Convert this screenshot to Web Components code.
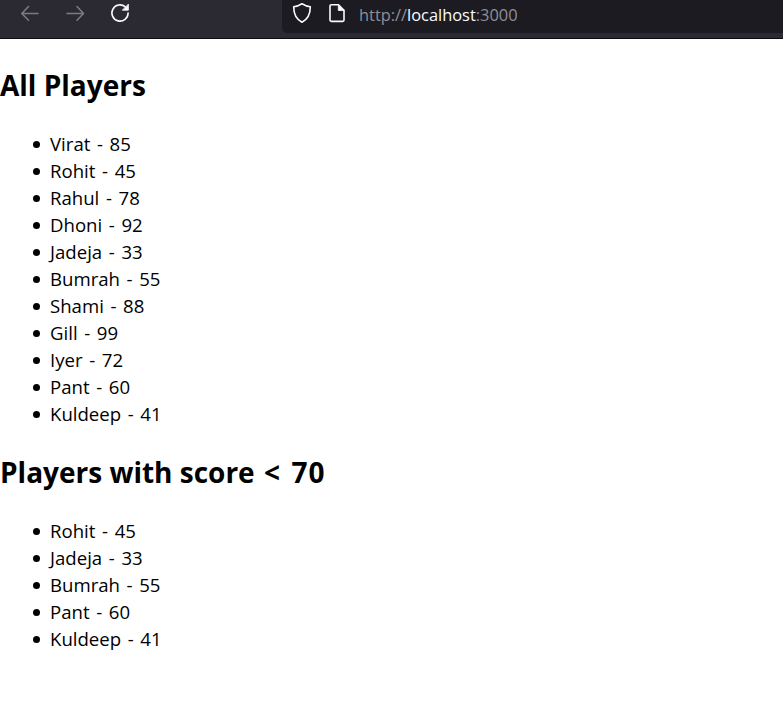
<!DOCTYPE html>
<html lang="en"><head><meta charset="utf-8"><title>Players</title>
<style>body{margin:0;background:#fff;color:#000;font-family:"Open Sans","Noto Sans",sans-serif}</style></head>
<body><browser-bar></browser-bar><player-app></player-app>
<script>
customElements.define('browser-bar', class extends HTMLElement {
  constructor() {
    super();
    this.attachShadow({mode:'open'}).innerHTML = `
<style>
:host{display:flex;box-sizing:border-box;height:39px;background:#2b2a33;border-bottom:1px solid #0c0c0d}
.nav{display:flex;width:282px;box-sizing:border-box;padding:2px 0 0 19px;gap:23px}
.url{flex:1;display:flex;height:33px;background:#1c1b22;border-radius:0 0 0 5px;box-sizing:border-box;padding:2px 0 0 9px}
svg{width:22px;height:22px;fill:none;stroke:#fbfbfe;stroke-width:1.6;stroke-linecap:round;stroke-linejoin:round;flex:none}
.dim{stroke:#7b7a82}
.page{margin-left:13px}
.fill{fill:#fbfbfe;stroke-width:.8}
span{font:16.4px/26px "Open Sans",sans-serif;color:#8f8f96;margin-left:11px;white-space:nowrap}
b{font-weight:400;color:#fbfbfe}
</style>
<div class="nav">
<svg class="dim" viewBox="0 0 22 22"><path d="M19 11.5H3M9.5 4.5L2.8 11.5l6.7 6.7"/></svg>
<svg class="dim" viewBox="0 0 22 22"><path d="M3 11.5h16M13 4.5l6.5 7-6.5 6.7"/></svg>
<svg viewBox="0 0 22 22"><path d="M19.1 11A8.1 8.1 0 1 1 16.3 4.9"/><path class="fill" d="M19.4 2.4v5.8h-5.8z"/></svg>
</div>
<div class="url">
<svg viewBox="0 0 22 22"><path d="M11 1.8C8.700 3.200 5.700 4.400 2.700 4.800C2.700 11.500 4.500 17 11 20.200C17.500 17 19.300 11.500 19.300 4.800C16.300 4.400 13.300 3.200 11 1.800z"/></svg>
<svg class="page" viewBox="0 0 22 22"><path d="M5.300 2.800h7.200l5.500 5.500v9.800a1.300 1.300 0 0 1-1.300 1.300H5.300A1.300 1.300 0 0 1 4 18.100V4.100a1.300 1.300 0 0 1 1.300-1.300z"/><path class="fill" d="M12.300 3v5.500h5.500z"/></svg>
<span>http://<b>localhost</b>:3000</span></div>`;
  }
});
customElements.define('player-list', class extends HTMLElement {
  connectedCallback() {
    this.attachShadow({mode:'open'}).innerHTML = `
<style>
:host{display:block}
h2{margin:0;font-size:28px;line-height:40px;font-weight:700;white-space:nowrap}
::slotted(.limit){letter-spacing:.9px;word-spacing:2.5px;margin-left:2px}
ul{margin:25px 0;padding:0 0 0 33px;list-style:none}
li{display:flex;align-items:center;font-size:18.6px;line-height:27px;word-spacing:1.8px}
li::before{content:"";width:7px;height:7px;margin:2px 10px 0 0;border-radius:50%;background:#000}
</style><h2><slot></slot></h2><ul></ul>`;
    const ul = this.shadowRoot.querySelector('ul');
    for (const p of this.players) { const li = document.createElement('li'); li.textContent = p.join(' - '); ul.append(li); }
  }
});
customElements.define('player-app', class extends HTMLElement {
  connectedCallback() {
    const all = [['Virat',85],['Rohit',45],['Rahul',78],['Dhoni',92],['Jadeja',33],['Bumrah',55],['Shami',88],['Gill',99],['Iyer',72],['Pant',60],['Kuldeep',41]];
    const root = this.attachShadow({mode:'open'});
    root.innerHTML = '<style>:host{display:block;padding-top:26px}</style>';
    for (const [title, players] of [['All Players', all], ['Players with score <span class="limit">&lt; 70</span>', all.filter(p => p[1] < 70)]]) {
      const list = document.createElement('player-list');
      list.innerHTML = title; list.players = players; root.append(list);
    }
  }
});
</script></body></html>
